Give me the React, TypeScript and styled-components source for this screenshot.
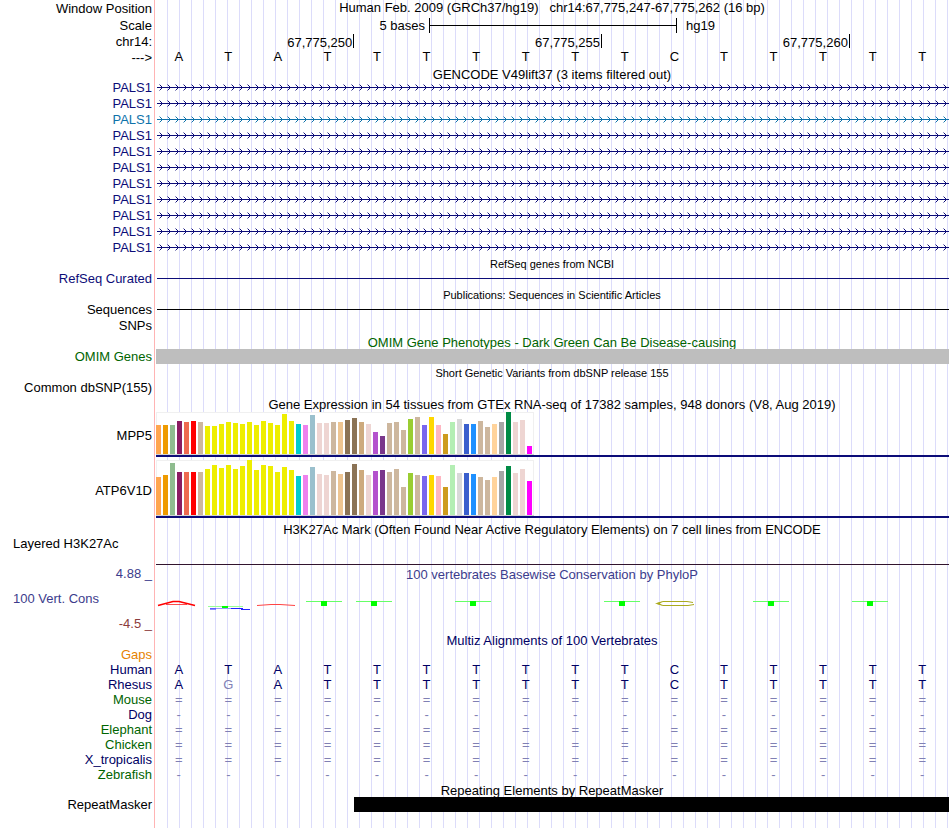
import React from "react";
import styled, { createGlobalStyle } from "styled-components";

const NAVY = "#0c0c78";
const DARK_NAVY = "#000064";
const TEAL = "#0e72aa";
const GREEN = "#006400";
const SLATE = "#3c3c8c";

const GlobalStyle = createGlobalStyle`
  body {
    margin: 0;
    background: #fff;
    color: #000;
    font-family: "Liberation Sans", Arial, Helvetica, sans-serif;
    font-size: 13px;
    line-height: 16px;
  }
`;

const Browser = styled.main`
  min-height: 100vh;
  box-sizing: border-box;
  padding-right: 1px;
  overflow: hidden;
  background-image: linear-gradient(to right, #fff 0 154px, #ffb4b4 154px 155px, #fff 155px 156px, transparent 156px),
    repeating-linear-gradient(to right, transparent 0 11px, #dcdcfa 11px 12px);
`;

const Row = styled.div<{ $h?: number }>`
  display: grid;
  grid-template-columns: 155px minmax(0, 1fr);
  min-height: ${(p) => p.$h ?? 16}px;
`;

const Label = styled.div<{ $color?: string; $start?: boolean }>`
  display: flex;
  align-items: center;
  justify-content: ${(p) => (p.$start ? "flex-start" : "flex-end")};
  padding: 0 3px 0 13px;
  color: ${(p) => p.$color ?? "#000"};
  white-space: pre;
`;

const Heading = styled.h1`
  margin: 0;
  font-size: 13px;
  font-weight: 400;
  line-height: 15px;
  text-align: center;
  white-space: pre;
`;

const Title = styled.h2<{ $h?: number; $small?: boolean; $color?: string }>`
  margin: 0 0 0 155px;
  height: ${(p) => p.$h ?? 15}px;
  line-height: 17px;
  font-size: ${(p) => (p.$small ? 11 : 13)}px;
  font-weight: 400;
  text-align: center;
  white-space: pre;
  color: ${(p) => p.$color ?? "#000"};
`;

const SignalTitle = styled(Title)`
  margin-left: 0;
`;

const ScaleTrack = styled.div`
  display: grid;
  grid-template-columns: 274fr 248fr 272fr;
  align-items: center;
`;

const ScaleText = styled.span<{ $end?: boolean }>`
  text-align: ${(p) => (p.$end ? "right" : "left")};
  padding: ${(p) => (p.$end ? "0 4px 0 0" : "0 0 0 9px")};
`;

const ScaleBar = styled.div`
  height: 15px;
  border: solid #000;
  border-width: 0 1px;
  background: linear-gradient(#000, #000) 0 7px / 100% 1px no-repeat;
`;

const Ruler = styled.div`
  display: grid;
  grid-template-columns: 4fr 5fr 5fr 2fr;
  padding-right: 1px;
`;

const Tick = styled.span`
  margin-right: -1px;
  padding-right: 1px;
  height: 14px;
  line-height: 17px;
  text-align: right;
  border-right: 1px solid #000;
`;

const Bases = styled.div`
  display: grid;
  grid-template-columns: repeat(16, 1fr);
  margin: 0 2px 0 -1px;
  line-height: 14px;
  text-align: center;
`;

const Line = styled.div<{ $color: string }>`
  height: 1px;
  margin: 7px 0 0 2px;
  background: ${(p) => p.$color};
`;

const ArrowSvg = styled.svg`
  display: block;
  width: calc(100% - 2px);
  height: 16px;
  margin-left: 2px;
`;

const Block = styled.div<{ $color: string; $from?: number }>`
  position: relative;
  height: 15px;
  margin-left: ${(p) => (p.$from ? `${p.$from}%` : "1px")};
  background: ${(p) => p.$color};
`;

const Expression = styled.div`
  align-self: start;
  margin-left: 1px;
  border-bottom: 2px solid ${NAVY};
`;

const Chart = styled.svg`
  display: block;
`;

const Signal = styled.div`
  height: 29px;
  box-sizing: border-box;
  margin-left: 1px;
  border-bottom: 1px solid #32142d;
`;

const Stack = styled.div`
  display: flex;
  flex-direction: column;
  justify-content: space-between;
`;

const SignalTrack = styled.div`
  display: flex;
  flex-direction: column;
  gap: 16px;
`;

const Logos = styled.div`
  display: grid;
  grid-template-columns: repeat(16, 1fr);
`;

const Logo = styled.svg`
  display: block;
  margin-left: 2px;
  overflow: visible;
`;

const Alignment = styled.table`
  width: calc(100% - 2px);
  table-layout: fixed;
  border-collapse: collapse;
  line-height: 15px;
`;

const Species = styled.th<{ $color: string }>`
  width: 152px;
  padding: 0 2px 0 0;
  font-weight: 400;
  text-align: right;
  color: ${(p) => p.$color};
`;

const Base = styled.td<{ $faint: boolean }>`
  padding: 0;
  text-align: center;
  color: ${(p) => (p.$faint ? "#8080b4" : DARK_NAVY)};
`;

const SEQUENCE = "ATATTTTTTTCTTTTT".split("");

const TRANSCRIPT_COLORS = [NAVY, NAVY, TEAL, NAVY, NAVY, NAVY, NAVY, NAVY, NAVY, NAVY, NAVY];

const TISSUE_COLORS = [
  "#ffa54f", "#ee9a00", "#8fbc8f", "#8b1c62", "#ee6a50", "#ff0000", "#cdb79e",
  ...Array<string>(13).fill("#eeee00"),
  "#00cdcd", "#ee82ee", "#9ac0cd", "#eed5d2", "#eed5d2", "#cdb79e", "#eec591",
  "#8b7355", "#8b7355", "#cdaa7d", "#eed5d2", "#b452cd", "#7a378b", "#cdb79e",
  "#cdb79e", "#cdb79e", "#9acd32", "#cdb79e", "#7a67ee", "#ffd700", "#ffb6c1",
  "#cd9b1d", "#b4eeb4", "#d9d9d9", "#3a5fcd", "#1e90ff", "#cdb79e", "#cdb79e",
  "#ffd39b", "#a6a6a6", "#008b45", "#eed5d2", "#eed5d2", "#ff00ff",
];

const MPP5 = [
  29, 29, 29, 33, 32, 33, 32, 28, 28, 30, 32, 31, 30, 32, 29, 33, 31, 29, 40, 33, 30, 29, 39, 31, 31, 32, 32,
  34, 36, 32, 30, 22, 18, 31, 32, 24, 35, 37, 29, 37, 29, 20, 32, 35, 30, 30, 33, 27, 30, 32, 42, 32, 34, 8,
];

const ATP6V1D = [
  38, 40, 52, 43, 43, 43, 43, 46, 50, 47, 50, 46, 49, 55, 45, 50, 49, 43, 48, 45, 39, 40, 48, 41, 40, 44, 41,
  43, 51, 45, 40, 44, 45, 43, 46, 28, 42, 40, 39, 40, 39, 28, 50, 42, 42, 41, 38, 35, 38, 44, 49, 42, 46, 34,
];

const SPECIES = [
  { name: "Gaps", color: "#e68200", cells: " ".repeat(16) },
  { name: "Human", color: DARK_NAVY, cells: "ATATTTTTTTCTTTTT" },
  { name: "Rhesus", color: DARK_NAVY, cells: "AGATTTTTTTCTTTTT" },
  { name: "Mouse", color: GREEN, cells: "=".repeat(16) },
  { name: "Dog", color: DARK_NAVY, cells: "-".repeat(16) },
  { name: "Elephant", color: GREEN, cells: "=".repeat(16) },
  { name: "Chicken", color: GREEN, cells: "=".repeat(16) },
  { name: "X_tropicalis", color: DARK_NAVY, cells: "=".repeat(16) },
  { name: "Zebrafish", color: GREEN, cells: "-".repeat(16) },
];

function Transcript({ id, color }: { id: string; color: string }) {
  return (
    <ArrowSvg aria-hidden="true" shapeRendering="crispEdges">
      <defs>
        <pattern id={id} width="8" height="16" patternUnits="userSpaceOnUse">
          <path d="M2 4h1v1h-1z M2 10h1v1h-1z" fill={color} opacity="0.45" />
          <path d="M3 5h1v1h-1z M4 6h1v1h-1z M4 8h1v1h-1z M3 9h1v1h-1z" fill={color} />
        </pattern>
      </defs>
      <rect width="100%" height="16" fill={`url(#${id})`} />
      <rect y="7" width="100%" height="1" fill={color} />
    </ArrowSvg>
  );
}

function ExpressionChart({ values, height, name }: { values: number[]; height: number; name: string }) {
  return (
    <Expression>
      <Chart width="378" height={height} role="img" aria-label={`${name} expression by tissue`}>
        <rect x="0.5" y="0.5" width="377" height={height - 1} fill="#fff" stroke="#f0f0f0" />
        <rect y={height - 1} width="378" height="1" fill="#d2d2d2" />
        {values.map((v, i) => (
          <rect key={i} x={i * 7} y={height - 1 - v} width="5" height={v} fill={TISSUE_COLORS[i]} />
        ))}
      </Chart>
    </Expression>
  );
}

function ConservationLogo({ index }: { index: number }) {
  let shape: React.ReactNode = null;
  if (index === 0) {
    shape = (
      <g stroke="#f00" fill="none">
        <path d="M1 8.5 L16 4.5 H22 L38 8.5" strokeWidth="1.6" />
        <path d="M9 7.5 H30" strokeWidth="1" opacity="0.7" />
      </g>
    );
  } else if (index === 1) {
    shape = (
      <g>
        <rect x="1" y="9" width="35" height="1" fill="#9f9" />
        <rect x="15" y="9" width="6" height="2" fill="#0f0" />
        <path d="M3 11.5 H36" stroke="#99f" strokeWidth="1" />
        <path d="M3 12 H9 M24 11.5 H36 M34 12.5 H43" stroke="#22f" strokeWidth="1" />
      </g>
    );
  } else if (index === 2) {
    shape = <path d="M1 8.5 L15 7.5 H24 L39 8.5" stroke="#f44" strokeWidth="1" fill="none" />;
  } else if ([3, 4, 6, 9, 12, 14].includes(index)) {
    shape = (
      <g>
        <rect y="4" width="36" height="1" fill="#6f6" />
        <rect x="15" y="4" width="6" height="5" fill="#0f0" />
      </g>
    );
  } else if (index === 10) {
    shape = (
      <g fill="none" stroke="#aaaa1e">
        <path d="M40 5.5 L34 4.5 H10 L4 6.5 L10 8.5 H35 L41 7.5" strokeWidth="1" />
        <path d="M2 6.5 L9 4.5 L7 6.5 L9 8.5 Z" fill="#aaaa1e" stroke="none" />
      </g>
    );
  }
  return (
    <Logo width="42" height="14" aria-hidden="true">
      {shape}
    </Logo>
  );
}

export default function App() {
  return (
    <>
      <GlobalStyle />
      <Browser>
        <Row $h={17}>
          <Label>Window Position</Label>
          <Heading>{"Human Feb. 2009 (GRCh37/hg19)   chr14:67,775,247-67,775,262 (16 bp)"}</Heading>
        </Row>
        <Row $h={17}>
          <Label>Scale</Label>
          <ScaleTrack>
            <ScaleText $end>5 bases</ScaleText>
            <ScaleBar />
            <ScaleText>hg19</ScaleText>
          </ScaleTrack>
        </Row>
        <Row>
          <Label>chr14:</Label>
          <Ruler>
            <Tick>67,775,250</Tick>
            <Tick>67,775,255</Tick>
            <Tick>67,775,260</Tick>
          </Ruler>
        </Row>
        <Row>
          <Label>{"--->"}</Label>
          <Bases>
            {SEQUENCE.map((b, i) => (
              <span key={i}>{b}</span>
            ))}
          </Bases>
        </Row>

        <Title $h={14}>GENCODE V49lift37 (3 items filtered out)</Title>
        {TRANSCRIPT_COLORS.map((color, i) => (
          <Row key={i}>
            <Label $color={color}>PALS1</Label>
            <Transcript id={`strand-${i}`} color={color} />
          </Row>
        ))}

        <Title $small>RefSeq genes from NCBI</Title>
        <Row>
          <Label $color={NAVY}>RefSeq Curated</Label>
          <Line $color={NAVY} />
        </Row>
        <Title $small>Publications: Sequences in Scientific Articles</Title>
        <Row>
          <Label>Sequences</Label>
          <Line $color="#000" />
        </Row>
        <Row>
          <Label>SNPs</Label>
        </Row>
        <Title $color={GREEN}>OMIM Gene Phenotypes - Dark Green Can Be Disease-causing</Title>
        <Row>
          <Label $color={GREEN}>OMIM Genes</Label>
          <Block $color="#bebebe" />
        </Row>
        <Title $small>Short Genetic Variants from dbSNP release 155</Title>
        <Row>
          <Label>Common dbSNP(155)</Label>
        </Row>

        <Title $h={16}>
          Gene Expression in 54 tissues from GTEx RNA-seq of 17382 samples, 948 donors (V8, Aug 2019)
        </Title>
        <Row $h={48}>
          <Label>MPP5</Label>
          <ExpressionChart values={MPP5} height={43} name="MPP5" />
        </Row>
        <Row $h={61}>
          <Label>ATP6V1D</Label>
          <ExpressionChart values={ATP6V1D} height={56} name="ATP6V1D" />
        </Row>

        <Title>H3K27Ac Mark (Often Found Near Active Regulatory Elements) on 7 cell lines from ENCODE</Title>
        <Row $h={30}>
          <Stack>
            <Label $start>Layered H3K27Ac</Label>
          </Stack>
          <Signal />
        </Row>
        <Row $h={66}>
          <Stack>
            <Label $color={SLATE}>4.88 _</Label>
            <Label $color={SLATE} $start>
              100 Vert. Cons
            </Label>
            <Label $color="#8c3c3c">-4.5 _</Label>
          </Stack>
          <SignalTrack>
            <SignalTitle $color={SLATE}>100 vertebrates Basewise Conservation by PhyloP</SignalTitle>
            <Logos>
              {SEQUENCE.map((_, i) => (
                <ConservationLogo key={i} index={i} />
              ))}
            </Logos>
          </SignalTrack>
        </Row>

        <Title $color={DARK_NAVY}>Multiz Alignments of 100 Vertebrates</Title>
        <Alignment>
          <tbody>
            {SPECIES.map((s) => (
              <tr key={s.name}>
                <Species scope="row" $color={s.color}>
                  {s.name}
                </Species>
                {s.cells.split("").map((c, i) => (
                  <Base key={i} $faint={"=-G".includes(c)}>
                    {c}
                  </Base>
                ))}
              </tr>
            ))}
          </tbody>
        </Alignment>

        <Title>Repeating Elements by RepeatMasker</Title>
        <Row>
          <Label>RepeatMasker</Label>
          <Block $color="#000" $from={25} />
        </Row>
      </Browser>
    </>
  );
}
